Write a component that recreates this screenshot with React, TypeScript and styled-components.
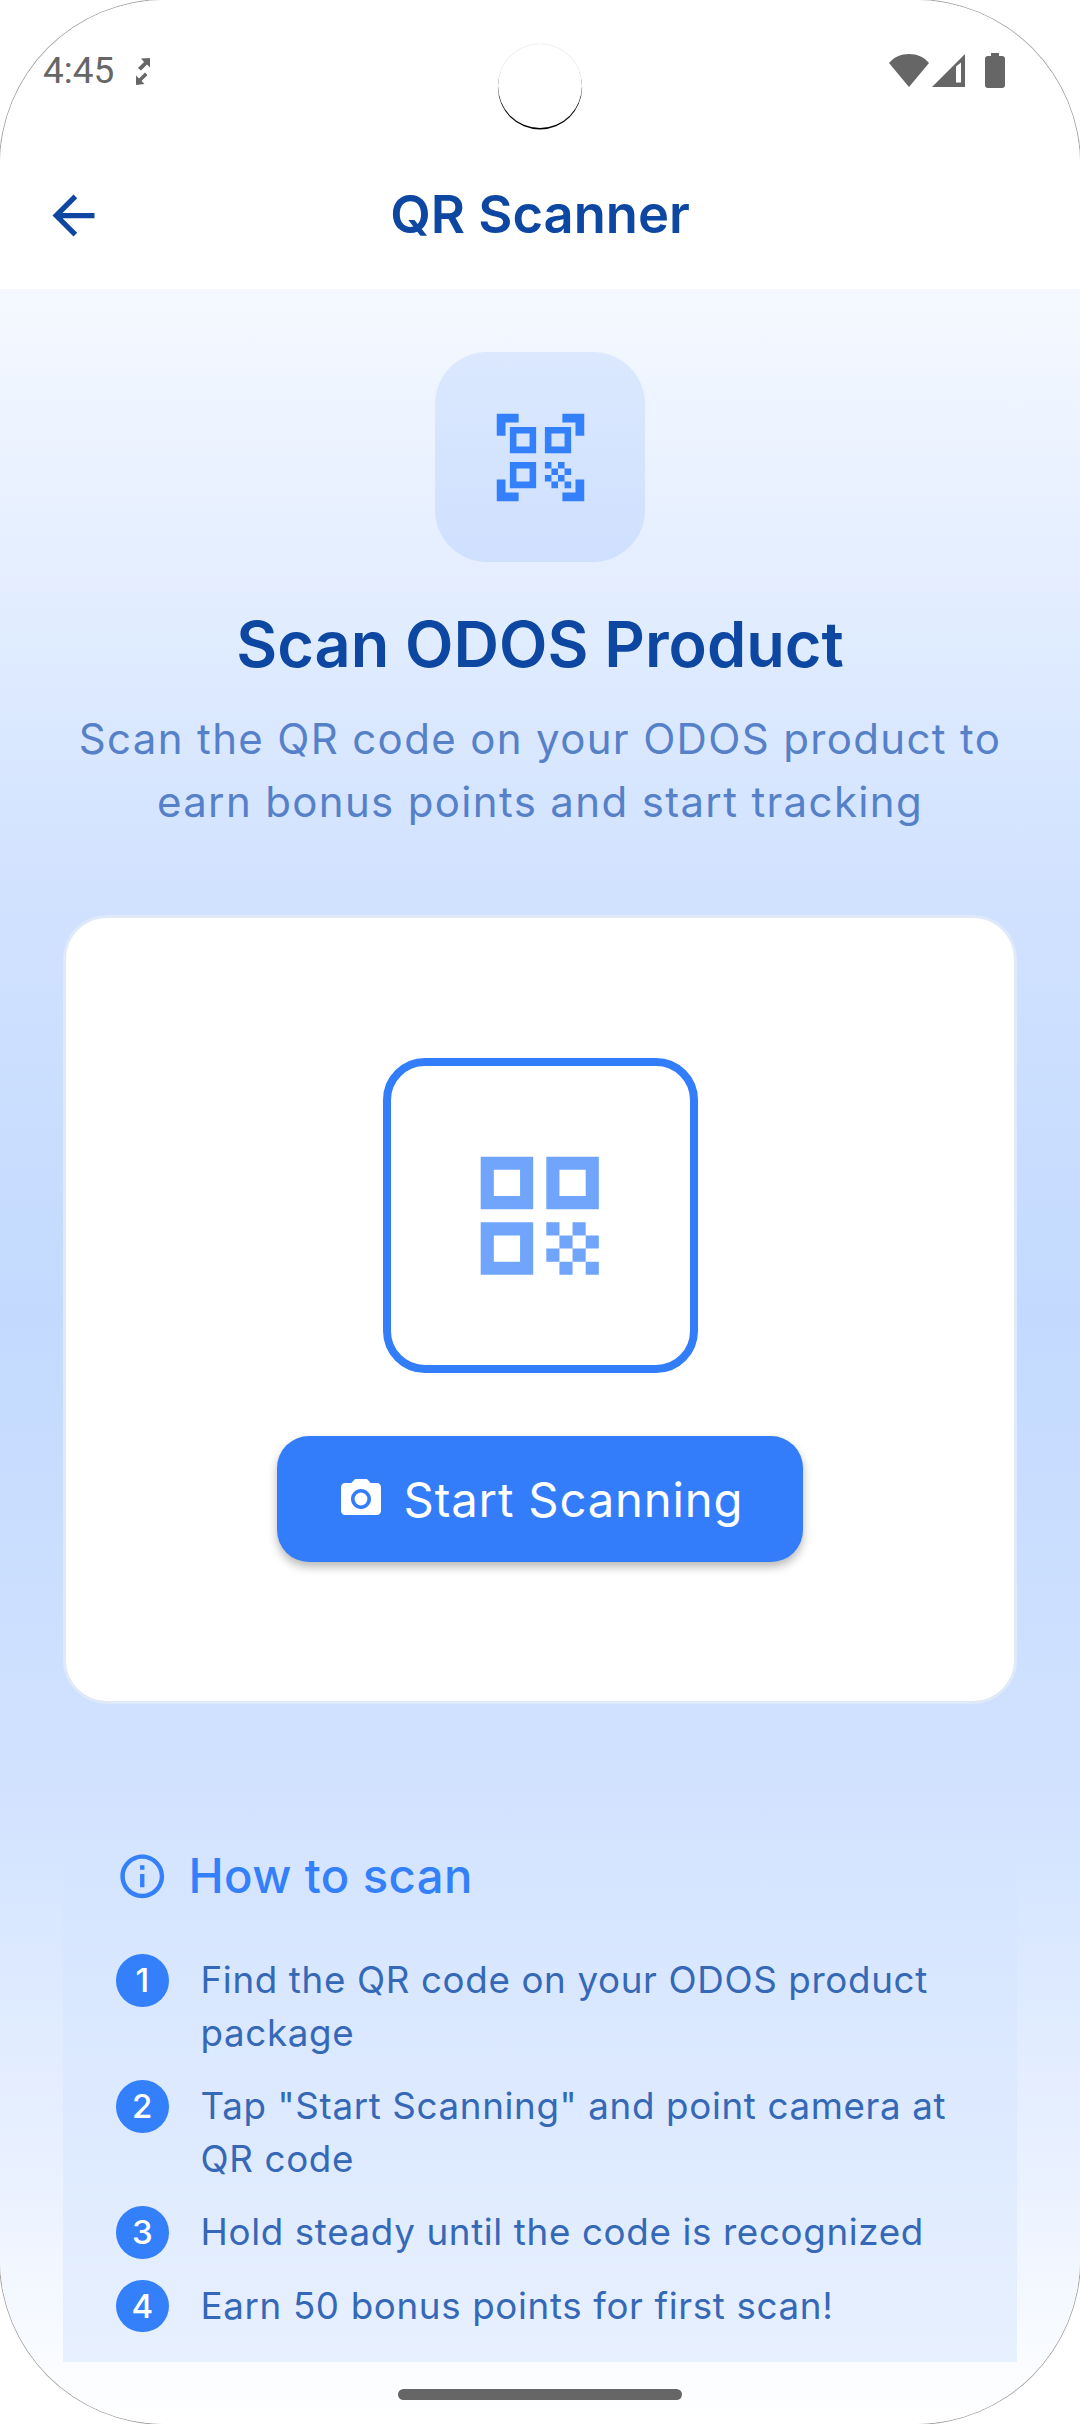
import React from 'react'
import styled, { createGlobalStyle } from 'styled-components'

const GlobalStyle = createGlobalStyle`
  html, body { margin: 0; padding: 0; background: #fff; }
  * { box-sizing: border-box; }
  body { font-family: Inter, "Noto Sans", sans-serif; }
`

const steps = [
  'Find the QR code on your ODOS product package',
  'Tap "Start Scanning" and point camera at QR code',
  'Hold steady until the code is recognized',
  'Earn 50 bonus points for first scan!',
]

function App() {
  return (
    <Device>
      <GlobalStyle />
      <Header>
        <StatusBar>
          <StatusLeft>
            <Time>4:45</Time>
            <svg width="16" height="29" viewBox="0 0 16 29" fill="#666">
              <path d="M15 1v9.500l-3-3-6 6-3-2.600 6-6L6 1.500z" />
              <path d="M1 28v-9.500l3 3 6-6 2.500 2.500-6 6 3 3z" />
            </svg>
          </StatusLeft>
          <StatusRight>
            <svg width="40" height="34" viewBox="0 0 40 34" fill="#666">
              <path d="M0 10C5 4 12 1 20 1s15 3 20 9L20 34z" />
            </svg>
            <svg width="34" height="34" viewBox="0 0 34 34" fill="#666">
              <path fillRule="evenodd" d="M33 1v33H0zM24 13.500v16h5v-20z" />
            </svg>
            <svg width="20" height="35" viewBox="0 0 20 35" fill="#666">
              <path d="M6 0h8v3h3c2 0 3 1 3 3v26c0 2-1 3-3 3H3c-2 0-3-1-3-3V6c0-2 1-3 3-3h3z" />
            </svg>
          </StatusRight>
        </StatusBar>
        <AppBar>
          <BackIcon viewBox="0 0 24 24" fill="#0d47a1">
            <path d="M20 11H7.830l5.590-5.590L12 4l-8 8 8 8 1.410-1.410L7.830 13H20v-2z" />
          </BackIcon>
          <Title>QR Scanner</Title>
        </AppBar>
      </Header>
      <Camera />
      <Content>
        <IconTile>
          <svg width="105" height="105" viewBox="0 0 24 24" fill="#3380fa">
            <path d="M9.500 6.500v3h-3v-3h3M11 5H5v6h6V5zm-1.500 9.500v3h-3v-3h3M11 13H5v6h6v-6zm6.500-6.500v3h-3v-3h3M19 5h-6v6h6V5zm-6 8h1.500v1.500H13V13zm1.500 1.500H16V16h-1.500v-1.500zM16 13h1.500v1.500H16V13zm-3 3h1.500v1.500H13V16zm1.500 1.500H16V19h-1.500v-1.500zM16 16h1.500v1.500H16V16zm1.500-1.500H19V16h-1.500v-1.500zm0 3H19V19h-1.500v-1.500zM22 7h-2V4h-3V2h5v5zm0 15v-5h-2v3h-3v2h5zM2 22h5v-2H4v-3H2v5zM2 2v5h2V4h3V2H2z" />
          </svg>
        </IconTile>
        <Heading>Scan ODOS Product</Heading>
        <Subtitle>
          Scan the QR code on your ODOS product to
          <br />
          earn bonus points and start tracking
        </Subtitle>
        <ScanCard>
          <ScanFrame>
            <svg width="157.500" height="157.500" viewBox="0 0 24 24" fill="#70a5fb">
              <path d="M3 11h8V3H3v8zm2-6h4v4H5V5zm-2 16h8v-8H3v8zm2-6h4v4H5v-4zm8-12v8h8V3h-8zm6 6h-4V5h4v4zm0 10h2v2h-2zm-6-6h2v2h-2zm2 2h2v2h-2zm-2 2h2v2h-2zm2 2h2v2h-2zm2-2h2v2h-2zm0-4h2v2h-2zm2 2h2v2h-2z" />
            </svg>
          </ScanFrame>
          <ScanButton>
            <svg width="48" height="48" viewBox="0 0 24 24" fill="#fff">
              <circle cx="12" cy="12" r="3.200" />
              <path d="M9 2 7.170 4H4c-1.100 0-2 .9-2 2v12c0 1.100.9 2 2 2h16c1.100 0 2-.9 2-2V6c0-1.100-.9-2-2-2h-3.170L15 2H9zm3 15c-2.760 0-5-2.240-5-5s2.240-5 5-5 5 2.240 5 5-2.240 5-5 5z" />
            </svg>
            Start Scanning
          </ScanButton>
        </ScanCard>
        <HowTo>
          <HowToTitle>
            <svg width="52.500" height="52.500" viewBox="0 0 24 24" fill="#3380fa">
              <path d="M11 7h2v2h-2zm0 4h2v6h-2zm1-9C6.480 2 2 6.480 2 12s4.480 10 10 10 10-4.480 10-10S17.520 2 12 2zm0 18c-4.410 0-8-3.590-8-8s3.590-8 8-8 8 3.590 8 8-3.590 8-8 8z" />
            </svg>
            How to scan
          </HowToTitle>
          <StepList>
            {steps.map((text, i) => (
              <Step key={text}>
                <StepNumber>{i + 1}</StepNumber>
                <StepText>{text}</StepText>
              </Step>
            ))}
          </StepList>
        </HowTo>
        <HomeIndicator />
      </Content>
    </Device>
  )
}

const Device = styled.div`
  position: relative;
  width: 1080px;
  height: 2424px;
  border-radius: 165px;
  overflow: hidden;
  background: #fff;
  display: flex;
  flex-direction: column;
  box-shadow: 0 0 0 1px rgba(0, 0, 0, 0.35);
`

const Header = styled.header`
  background: #fff;
  height: 289px;
  flex: none;
`

const StatusBar = styled.div`
  height: 141px;
  padding: 52px 75px 0 43px;
  display: flex;
  justify-content: space-between;
  align-items: flex-start;
`

const StatusLeft = styled.div`
  display: flex;
  align-items: center;
  gap: 21px;
  color: #666;
`

const StatusRight = styled.div`
  display: flex;
  align-items: flex-start;
  gap: 3px;
  margin-top: 1px;

  svg:last-child {
    margin-left: 16px;
  }
`

const Time = styled.span`
  font-family: Roboto, sans-serif;
  font-size: 37px;
  line-height: 38px;
  color: #666;
`

const AppBar = styled.div`
  position: relative;
  height: 148px;
  padding-bottom: 3px;
  display: flex;
  align-items: center;
  justify-content: center;
`

const BackIcon = styled.svg`
  position: absolute;
  left: 42px;
  top: 43px;
  width: 63px;
  height: 63px;
`

const Title = styled.h1`
  margin: 0;
  font-size: 52.500px;
  font-weight: 600;
  color: #0d47a1;
  line-height: 64px;
`

const Camera = styled.div`
  position: absolute;
  left: 498px;
  top: 44px;
  width: 84px;
  height: 84px;
  border-radius: 50%;
  background: #fff;
  box-shadow: 0 1.500px 0.500px #000, 0 0 1px rgba(0, 0, 0, 0.25);
`

const Content = styled.main`
  flex: 1;
  display: flex;
  flex-direction: column;
  align-items: center;
  padding: 63px 63px 0;
  background: linear-gradient(
    180deg,
    #f5f9ff 0%,
    #d1e2ff 28%,
    #c3dafe 48%,
    #d1e2ff 70%,
    #e9f1ff 88%,
    #ffffff 100%
  );
`

const IconTile = styled.div`
  width: 210px;
  height: 210px;
  border-radius: 52px;
  display: flex;
  align-items: center;
  justify-content: center;
  background: linear-gradient(180deg, #dbe8fe 0%, #cfe0fe 100%);
`

const Heading = styled.h2`
  margin: 44px 0 0;
  font-size: 63px;
  line-height: 76px;
  font-weight: 600;
  color: #0d47a1;
`

const Subtitle = styled.p`
  margin: 25px 0 0;
  font-size: 42px;
  line-height: 63px;
  font-weight: 400;
  letter-spacing: 1.340px;
  text-align: center;
  color: #5681c8;
`

const ScanCard = styled.section`
  margin-top: 82px;
  width: 954px;
  height: 789px;
  flex: none;
  border-radius: 44px;
  border: 3px solid #e0e9f8;
  background: #fff;
  display: flex;
  flex-direction: column;
  align-items: center;
  padding-top: 140px;
`

const ScanFrame = styled.div`
  width: 315px;
  height: 315px;
  border-radius: 42px;
  border: 8px solid #327df9;
  display: flex;
  align-items: center;
  justify-content: center;
`

const ScanButton = styled.button`
  margin-top: 63px;
  width: 526px;
  height: 126px;
  border: none;
  border-radius: 32px;
  background: #337dfa;
  color: #fff;
  font-family: inherit;
  font-size: 47.250px;
  font-weight: 400;
  letter-spacing: 0.820px;
  display: flex;
  align-items: center;
  justify-content: center;
  gap: 19px;
  box-shadow: 0 5px 10px rgba(0, 0, 0, 0.28);
`

const HowTo = styled.section`
  margin-top: 134px;
  width: 954px;
  height: 524px;
  flex: none;
  padding: 8px 53px 0;
  background: linear-gradient(180deg, rgba(51, 128, 250, 0) 0%, rgba(51, 128, 250, 0.09) 100%);
`

const HowToTitle = styled.h3`
  margin: 0;
  display: flex;
  align-items: center;
  gap: 20px;
  font-size: 47.250px;
  line-height: 60px;
  font-weight: 500;
  letter-spacing: 0.400px;
  color: #3380fa;
`

const StepList = styled.ol`
  list-style: none;
  margin: 48px 0 0;
  padding: 0;
  display: flex;
  flex-direction: column;
  gap: 21px;
`

const Step = styled.li`
  display: flex;
  align-items: flex-start;
  gap: 32px;
`

const StepNumber = styled.span`
  width: 52.500px;
  height: 52.500px;
  flex: none;
  border-radius: 50%;
  background: #3380fa;
  color: #fff;
  font-size: 33px;
  font-weight: 500;
  display: flex;
  align-items: center;
  justify-content: center;
`

const StepText = styled.span`
  font-size: 36.750px;
  line-height: 52.500px;
  letter-spacing: 0.640px;
  color: #3568b6;
`

const HomeIndicator = styled.div`
  margin-top: 27px;
  width: 284px;
  height: 11px;
  flex: none;
  border-radius: 6px;
  background: #666;
`

export default App
